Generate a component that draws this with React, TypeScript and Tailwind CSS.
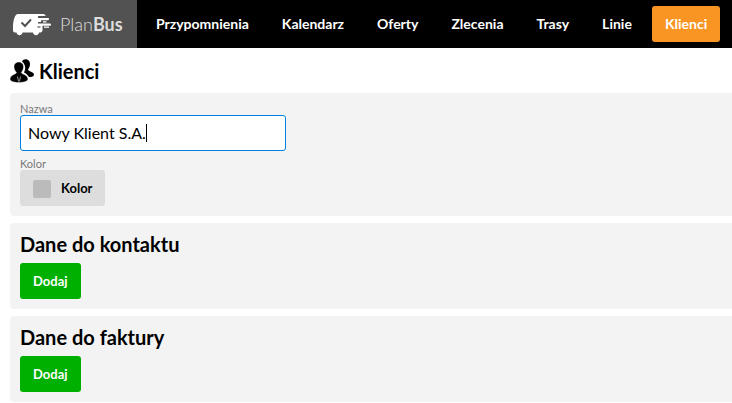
import { useState } from "react";
import type { ReactNode } from "react";

const navItems = ["Przypomnienia", "Kalendarz", "Oferty", "Zlecenia", "Trasy", "Linie", "Klienci"];

function VanLogo() {
  return (
    <svg className="h-6 w-10 shrink-0" viewBox="0 0 40 24" aria-hidden="true">
      <path
        fill="#fff"
        d="M6 2H31C32.500 2 33.500 2.800 33.500 4H26V6H36C37.500 6 37.500 8.200 36 8.200H29V10H26V11.500H37.500C39.500 11.500 39.500 13.800 37.500 13.800H30.500V18C30.500 19.500 29.500 20.500 28.500 20.500H27C26.500 24 21.500 24 21 20.500H10.500C10 24 5 24 4.500 20.500H3C1.500 20.500 1 19.500 1 18V14C1.300 9 2.500 2 6 2Z"
      />
      <path d="M31 9.900H34.500M32 15.200H37" stroke="#fff" strokeWidth="1.300" />
      <path d="M25.500 15H28.500" stroke="#525252" strokeWidth="1.200" />
      <path d="M9.500 10.500L13 14L19 7.500" fill="none" stroke="#525252" strokeWidth="2" />
    </svg>
  );
}

function ClientsIcon() {
  return (
    <svg className="h-6 w-6 shrink-0" viewBox="0 0 24 24" aria-hidden="true">
      <path d="M12 2.500C13.500-1 20-.500 20 5C20 7.500 19 9 18 10.500C18.500 12.500 23.500 12.500 24 15.500C24 17.500 22 18 19 18C17.500 15.500 16 14.500 14 13.500C16 10 15.500 5 12 2.500Z" />
      <path
        d="M4 7.500C4 1.500 13.500 1.500 13.500 7.500C13.500 10.500 12.500 12 11.300 13.500C12 15.500 17.500 15.500 18 20C18 22.500 13 23.500 9 23.500C4.500 23.500 0 22.500 0 20C.5 15.500 6 15.500 6.500 13.500C5 12 4 10.500 4 7.500Z"
        stroke="#fff"
        strokeWidth=".4"
      />
      <path d="M7.500 17.500L8.500 22.500M10.500 17.500L9.500 22.500" fill="none" stroke="#fff" strokeWidth=".6" />
    </svg>
  );
}

function Panel({ children }: { children: ReactNode }) {
  return <section className="rounded-l bg-[#f3f3f3] px-2.5 pb-2.5">{children}</section>;
}

function AddSection({ title }: { title: string }) {
  return (
    <Panel>
      <h2 className="pb-[5px] pt-[7px] text-xl font-bold leading-7">{title}</h2>
      <button type="button" className="block h-9 rounded-[3px] bg-[#00b000] px-[13px] pt-0.5 text-[13px] font-bold text-white">
        Dodaj
      </button>
    </Panel>
  );
}

export default function App() {
  const [name, setName] = useState("Nowy Klient S.A.");
  const [edited, setEdited] = useState(false);
  return (
    <div className="overflow-hidden bg-white font-['Lato',sans-serif] text-black">
      <header className="flex h-12 bg-black">
        <a href="#" aria-label="PlanBus" className="flex w-[137px] shrink-0 items-center gap-2 bg-[#525252] pl-3">
          <VanLogo />
          <span className="text-lg font-light leading-6 text-[#ddd]">
            Plan<b className="font-bold">Bus</b>
          </span>
        </a>
        <nav className="flex items-center gap-[7px] px-1.5">
          {navItems.map((item) => (
            <a
              key={item}
              href="#"
              className={
                item === "Klienci"
                  ? "flex h-9 items-center rounded-[3px] bg-[#f99623] px-[13px] text-sm font-bold text-white"
                  : "flex h-9 items-center rounded-[3px] px-[13px] text-sm font-bold text-white"
              }
            >
              {item}
            </a>
          ))}
        </nav>
      </header>
      <main className="pl-2.5">
        <div className="flex h-[45px] items-center gap-[5px]">
          <ClientsIcon />
          <h1 className="text-xl font-bold leading-7">Klienci</h1>
        </div>
        <div className="flex flex-col gap-[7px]">
          <Panel>
            <label htmlFor="name" className="block pt-2.5 text-[11px] leading-3 text-[#777]">
              Nazwa
            </label>
            <div className="relative w-[266px]">
              <input
                id="name"
                autoFocus
                autoComplete="off"
                value={name}
                onChange={(e) => {
                  setEdited(true);
                  setName(e.target.value);
                }}
                className="block h-9 w-full rounded-[3px] border border-[#0080e0] bg-white px-[7px] pb-0.5 text-base outline-none"
              />
              {!edited && <span className="absolute left-[126px] top-[9px] h-[18px] w-px bg-black" />}
            </div>
            <label htmlFor="color" className="block pt-[7px] text-[11px] leading-3 text-[#777]">
              Kolor
            </label>
            <button
              id="color"
              type="button"
              className="flex h-9 items-center gap-2.5 rounded-[3px] bg-[#ddd] px-[13px] pt-0.5 text-[13px] font-bold"
            >
              <span className="size-[18px] rounded-[2px] bg-[#bbb]" />
              Kolor
            </button>
          </Panel>
          <AddSection title="Dane do kontaktu" />
          <AddSection title="Dane do faktury" />
        </div>
      </main>
    </div>
  );
}
